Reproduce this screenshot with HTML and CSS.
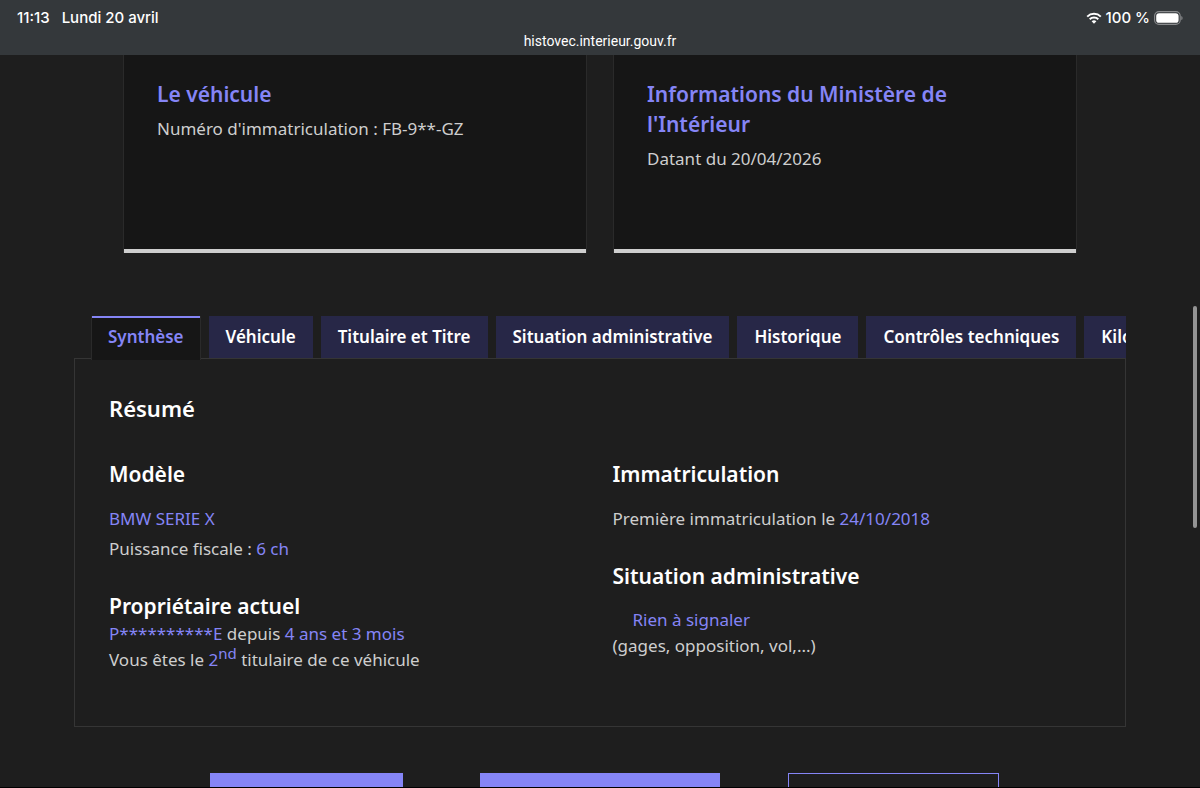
FILE: index.html
```html
<!DOCTYPE html>
<html lang="fr">
<head>
<meta charset="utf-8">
<meta name="viewport" content="width=device-width, initial-scale=1">
<title>histovec.interieur.gouv.fr</title>
<link rel="stylesheet" href="styles.css">
</head>
<body>
<header class="topbar">
  <div class="status">
    <div class="status-group"><span>11:13</span><span>Lundi 20 avril</span></div>
    <div class="status-right">
      <svg class="wifi" viewBox="0 0 16 12" aria-hidden="true">
        <path d="M1.2 4.6a9.8 9.8 0 0 1 13.6 0M3.7 7.2a6.2 6.2 0 0 1 8.6 0" fill="none" stroke="currentColor" stroke-width="2"/>
        <path d="M8 11.8 5.6 9.3a3.5 3.5 0 0 1 4.8 0z" fill="currentColor"/>
      </svg>
      <span>100 %</span>
      <svg class="battery" viewBox="0 0 29 14" aria-hidden="true">
        <rect x=".6" y=".6" width="25.6" height="12.8" rx="4.4" fill="none" stroke="#8a8c8e" stroke-width="1.1"/>
        <rect x="2.2" y="2.2" width="22.4" height="9.6" rx="2.9" fill="#fff"/>
        <path d="M27.3 4.9c1.7.6 1.7 3.6 0 4.2z" fill="#8a8c8e"/>
      </svg>
    </div>
  </div>
  <div class="address">histovec.interieur.gouv.fr</div>
</header>
<main class="page">
  <section class="cards">
    <article class="card">
      <h3 class="card-title">Le véhicule</h3>
      <p class="card-text">Numéro d'immatriculation : FB-9**-GZ</p>
    </article>
    <article class="card">
      <h3 class="card-title">Informations du Ministère de l'Intérieur</h3>
      <p class="card-text">Datant du 20/04/2026</p>
    </article>
  </section>
  <section class="report">
    <div class="tabs" role="tablist">
      <button class="tab tab-active" type="button" role="tab" id="tab-synthese" aria-selected="true" aria-controls="panel">Synthèse</button>
      <button class="tab" type="button" role="tab" aria-selected="false">Véhicule</button>
      <button class="tab" type="button" role="tab" aria-selected="false">Titulaire et Titre</button>
      <button class="tab" type="button" role="tab" aria-selected="false">Situation administrative</button>
      <button class="tab" type="button" role="tab" aria-selected="false">Historique</button>
      <button class="tab" type="button" role="tab" aria-selected="false">Contrôles techniques</button>
      <button class="tab" type="button" role="tab" aria-selected="false">Kilo</button>
    </div>
    <div class="panel" role="tabpanel" id="panel" aria-labelledby="tab-synthese">
      <h2 class="panel-title">Résumé</h2>
      <div class="columns">
        <div class="column">
          <section>
            <h3 class="block-title">Modèle</h3>
            <p class="text text-loose"><span class="value">BMW SERIE X</span></p>
            <p class="text text-loose">Puissance fiscale : <span class="value">6 ch</span></p>
          </section>
          <section>
            <h3 class="block-title block-title-tight">Propriétaire actuel</h3>
            <p class="text"><span class="value">P**********E</span> depuis <span class="value">4 ans et 3 mois</span></p>
            <p class="text">Vous êtes le <span class="value">2<sup class="ordinal">nd</sup></span> titulaire de ce véhicule</p>
          </section>
        </div>
        <div class="column">
          <section>
            <h3 class="block-title">Immatriculation</h3>
            <p class="text text-loose">Première immatriculation le <span class="value">24/10/2018</span></p>
          </section>
          <section>
            <h3 class="block-title">Situation administrative</h3>
            <p class="text text-indent"><span class="value">Rien à signaler</span></p>
            <p class="text">(gages, opposition, vol,...)</p>
          </section>
        </div>
      </div>
    </div>
  </section>
  <div class="actions">
    <div class="action"><button class="button button-small" type="button"></button></div>
    <div class="action"><button class="button button-large" type="button"></button></div>
    <div class="action"><button class="button button-outline" type="button"></button></div>
  </div>
</main>
<div class="scroll-thumb"></div>
</body>
</html>
```

FILE: styles.css
```css
* {
  box-sizing: border-box;
}

body {
  margin: 0;
  height: 100vh;
  overflow: hidden;
  position: relative;
  display: flex;
  flex-direction: column;
  background: #1e1e1e;
  border-bottom: 1px solid #000;
  color: #cecece;
  font: 17px/26px "Noto Sans", sans-serif;
}

h2, h3, p {
  margin: 0;
}

.topbar {
  flex: none;
  height: 55px;
  padding: 8px 17px 0;
  background: #34383b;
  color: #fff;
  font-family: Inter, sans-serif;
  font-size: 15px;
  font-weight: 500;
  line-height: 20px;
}

.status,
.status-group,
.status-right {
  display: flex;
  align-items: center;
}

.status {
  justify-content: space-between;
}

.status-group {
  gap: 12px;
}

.status-right {
  gap: 4px;
}

.wifi {
  width: 16px;
  height: 12px;
}

.battery {
  width: 29px;
  height: 14px;
}

.address {
  margin-top: 3px;
  text-align: center;
  font-family: Roboto, sans-serif;
  font-size: 14px;
  font-weight: 400;
}

.page {
  flex: 1;
  min-height: 0;
  overflow: hidden;
  padding: 0 74px;
}

.cards {
  display: grid;
  grid-template-columns: 1fr 1fr;
  gap: 26px;
  padding: 0 49px;
}

.card {
  min-height: 198px;
  padding: 24px 33px;
  background: #161616;
  border: solid #2a2a2a;
  border-width: 0 1px;
  box-shadow: inset 0 -4px #cecece;
}

.card-title {
  margin-bottom: 7px;
  color: #8585f6;
  font-size: 21px;
  font-weight: 600;
  line-height: 30px;
}

.report {
  margin-top: 63px;
}

.tabs {
  position: relative;
  z-index: 1;
  display: flex;
  align-items: flex-start;
  gap: 8px;
  margin-bottom: -2px;
  padding-left: 17px;
  overflow: hidden;
}

.tab {
  flex: none;
  height: 42px;
  padding: 0 17px;
  border: 0;
  background: #272747;
  color: #fff;
  font: 600 17px/26px "Noto Sans", sans-serif;
}

.tab-active {
  height: 44px;
  padding: 0 16px 2px;
  border: solid #2a2a2a;
  border-width: 0 1px;
  background: #161616;
  box-shadow: inset 0 2px #8585f6;
  color: #8585f6;
}

.panel {
  padding: 33px 33px 53px 34px;
  border: 1px solid #353535;
}

.panel-title {
  margin-bottom: 35px;
  color: #fff;
  font-size: 22px;
  font-weight: 600;
  line-height: 32px;
}

.columns {
  display: grid;
  grid-template-columns: 1fr 1fr;
  gap: 24px;
}

.column {
  display: flex;
  flex-direction: column;
  gap: 27px;
}

.block-title {
  margin-bottom: 15px;
  color: #fff;
  font-size: 21px;
  font-weight: 600;
  line-height: 30px;
}

.block-title-tight {
  margin-bottom: 0;
}

.text-loose {
  line-height: 30px;
}

.text-indent {
  padding: 1px 0 0 20px;
}

.value {
  color: #8585f6;
}

.ordinal {
  font-size: 15px;
  line-height: 0;
}

.actions {
  display: grid;
  grid-template-columns: repeat(3, 1fr);
  margin-top: 46px;
  padding: 0 86px;
}

.action {
  display: flex;
  justify-content: center;
}

.button {
  height: 44px;
  border: 0;
  background: #8585f6;
}

.button-small {
  width: 193px;
}

.button-large {
  width: 240px;
}

.button-outline {
  width: 211px;
  background: transparent;
  border: 1px solid #8585f6;
}

.scroll-thumb {
  position: absolute;
  top: 306px;
  right: 3px;
  width: 4px;
  height: 222px;
  border-radius: 2px;
  background: #949494;
}
```
